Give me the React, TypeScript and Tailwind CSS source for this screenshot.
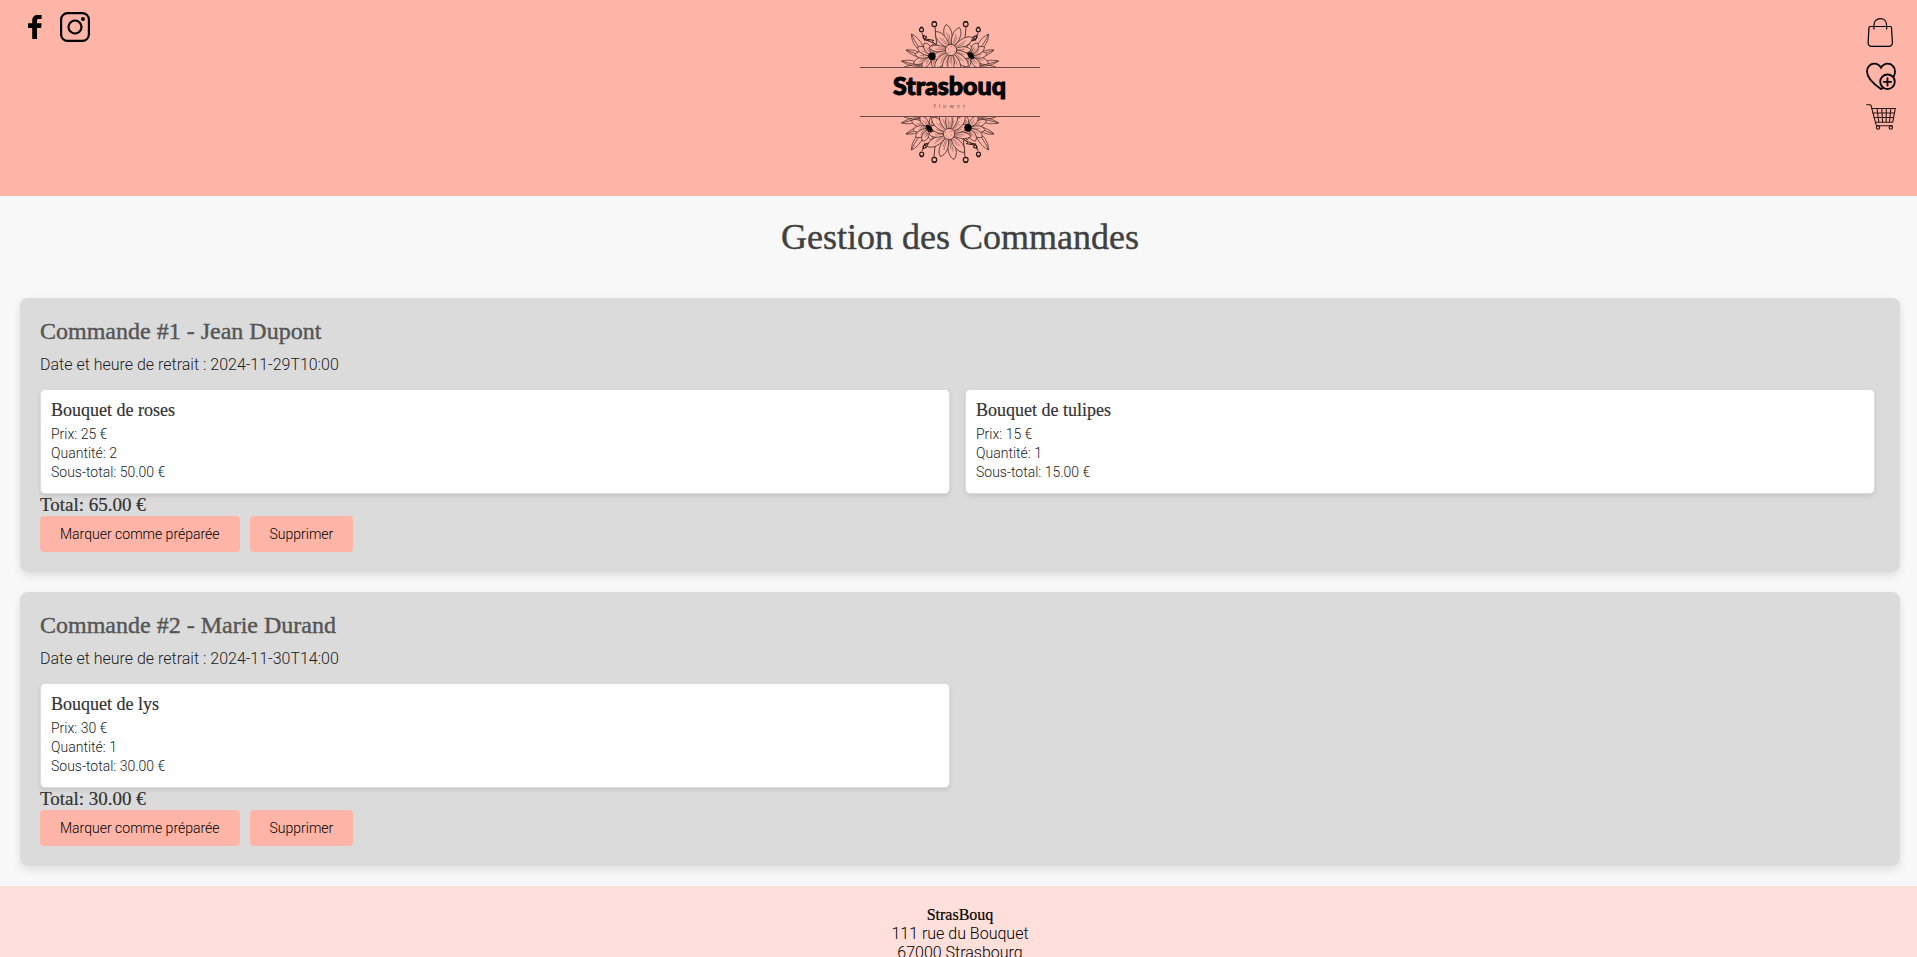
type Item = { name: string; price: number; quantity: number };
type Order = { id: number; customer: string; pickup: string; items: Item[] };

const orders: Order[] = [
  {
    id: 1,
    customer: "Jean Dupont",
    pickup: "2024-11-29T10:00",
    items: [
      { name: "Bouquet de roses", price: 25, quantity: 2 },
      { name: "Bouquet de tulipes", price: 15, quantity: 1 },
    ],
  },
  {
    id: 2,
    customer: "Marie Durand",
    pickup: "2024-11-30T14:00",
    items: [{ name: "Bouquet de lys", price: 30, quantity: 1 }],
  },
];

const largeSerif = "font-['Liberation_Serif',serif] font-normal [-webkit-text-stroke:0.4px_currentColor]";
const smallSerif = "font-['Liberation_Serif',serif] font-normal [-webkit-text-stroke:0.2px_currentColor]";

type PetalSpec = { angle: number; length: number; width: number };

// Petal angles are in degrees, clockwise from straight up.
function Petals({ x, y, start, petals }: { x: number; y: number; start: number; petals: PetalSpec[] }) {
  return (
    <g transform={`translate(${x} ${y})`}>
      {petals.map(({ angle, length: l, width: w }) => (
        <g key={angle} transform={`rotate(${angle})`}>
          <path
            fill="#feb4a7"
            d={`M-1.5 ${-start} C${-w} ${-l * 0.5} ${-w} ${-l * 0.85} 0 ${-l} C${w} ${-l * 0.85} ${w} ${-l * 0.5} 1.5 ${-start}Z`}
          />
          <path strokeWidth="0.35" d={`M-0.4 ${-start - 1} L-0.8 ${-l * 0.7} M0.8 ${-start - 1} L1 ${-l * 0.6}`} />
        </g>
      ))}
    </g>
  );
}

function Bouquet({ flipped = false }: { flipped?: boolean }) {
  return (
    <svg
      viewBox="0 0 180 51"
      className={flipped ? "block h-[51px] w-full rotate-180" : "block h-[51px] w-full"}
      fill="none"
      stroke="#2a1917"
      strokeWidth="0.65"
      aria-hidden="true"
    >
      <g strokeWidth="0.8">
        <path d="M75 11 L76 22 L77 30 M62 17 L64 23 L76 28 M64 24 L70 25 M72 25 L76 29" />
        <path d="M106 11 L105 22 L103 30 M118 17 L116 23 L104 28 M116 24 L110 25 M108 25 L104 29" />
        <circle cx="74.3" cy="8.2" r="2.4" strokeWidth="1.2" />
        <circle cx="61.5" cy="13.8" r="2" strokeWidth="1.2" />
        <circle cx="105.7" cy="8.2" r="2.4" strokeWidth="1.2" />
        <circle cx="118.3" cy="13.8" r="2" strokeWidth="1.2" />
        <path d="M72.4 5.6h3.8M103.8 5.6h3.8M60 11.4h3M116.8 11.4h3" strokeWidth="1.3" />
        <path d="M63.500 19.500l3 1.500-2 2.500-1.500-2zM116.500 19.500l-3 1.500 2 2.500 1.500-2zM66 23l8 1.500M114 23l-8 1.500" strokeWidth="1.100" />
      </g>
      <path d="M67 38 C58 35 51 27 51.5 18 C60 22 63 30 67 38Z M51.5 18 C55 27 60 33 67 38" />
      <path d="M113 38 C122 35 129 27 128.5 18 C120 22 117 30 113 38Z M128.5 18 C125 27 120 33 113 38" />
      <path d="M64 41 C58 42 51 39 46 34 C54 33 60 36 64 41Z M46 34 L62 40" />
      <path d="M116 41 C122 42 129 39 134 34 C126 33 120 36 116 41Z M134 34 L118 40" />
      <path d="M62 50 C54 51 47 49 41.5 45 C50 43 57 45 62 50Z M41.5 45 L60 50 M44 51 L52 49" />
      <path d="M118 50 C126 51 133 49 138.5 45 C130 43 123 45 118 50Z M138.5 45 L120 50 M136 51 L128 49" />
      <Petals
        x={72}
        y={40}
        start={3}
        petals={[
          { angle: -112, length: 20, width: 4 },
          { angle: -84, length: 17, width: 4 },
          { angle: -58, length: 17, width: 4 },
          { angle: -30, length: 15, width: 4 },
          { angle: 5, length: 12, width: 3 },
          { angle: -140, length: 15, width: 4 },
          { angle: 160, length: 14, width: 4 },
        ]}
      />
      <Petals
        x={110}
        y={40}
        start={3}
        petals={[
          { angle: 112, length: 20, width: 4 },
          { angle: 84, length: 17, width: 4 },
          { angle: 58, length: 17, width: 4 },
          { angle: 30, length: 15, width: 4 },
          { angle: -5, length: 12, width: 3 },
          { angle: 140, length: 15, width: 4 },
          { angle: 200, length: 14, width: 4 },
        ]}
      />
      <Petals
        x={91}
        y={34}
        start={5}
        petals={[
          { angle: -11, length: 26, width: 5 },
          { angle: 21, length: 24, width: 5 },
          { angle: -40, length: 24, width: 5 },
          { angle: 60, length: 25, width: 5 },
          { angle: 90, length: 20, width: 4 },
          { angle: -84, length: 22, width: 4 },
          { angle: 112, length: 20, width: 4 },
          { angle: 134, length: 24, width: 5 },
          { angle: -114, length: 22, width: 4 },
          { angle: -138, length: 24, width: 5 },
          { angle: 160, length: 24, width: 5 },
          { angle: -163, length: 24, width: 5 },
          { angle: 180, length: 22, width: 4 },
        ]}
      />
      <circle cx="91" cy="34" r="5.6" fill="#feb4a7" />
      <path d="M88 33h.6M90 36h.6M93 32h.6M91 30.5h.6M94 35.5h.6M88.5 36.8h.6" />
      <circle cx="72" cy="40.3" r="3.7" fill="#000" stroke="none" />
      <path d="M107.5 37 C110 35.5 113 36.5 113.6 39.5 L114 42.5 C111 44 108 41.5 107.5 37Z" fill="#000" />
    </svg>
  );
}

function Logo() {
  return (
    <a href="#accueil" aria-label="Strasbouq flower" className="block w-[180px] text-black">
      <Bouquet />
      <span className="flex h-[50px] flex-col items-center border-y border-[#6b4a45]">
        <span className="font-['Lato',sans-serif] text-[25px] leading-[34px] font-black [-webkit-text-stroke:1px_#000]">
          Strasbouq
        </span>
        <span className="pl-[3px] font-['Lato',sans-serif] text-[6px] leading-[8px] tracking-[3px]">flower</span>
      </span>
      <Bouquet flipped />
    </a>
  );
}

function FacebookIcon() {
  return (
    <svg viewBox="0 0 14 24" className="h-6 w-3.5" fill="#000" aria-hidden="true">
      <path d="M4.2 8.2V5.6C4.2 2 6.3 0 9.8 0h3.8v4.1h-2.7C9.500 4.100 9 4.700 9 5.800v2.400h4.600l-.5 4.700H9V24H4.200V12.900H0V8.200z" />
    </svg>
  );
}

function InstagramIcon() {
  return (
    <svg viewBox="0 0 30 30" className="size-[30px]" fill="none" stroke="#000" strokeWidth="2.200" aria-hidden="true">
      <rect x="1.100" y="1.100" width="27.800" height="27.800" rx="6.500" />
      <circle cx="15" cy="15" r="6.500" />
      <circle cx="23" cy="7" r="2" fill="#000" stroke="none" />
    </svg>
  );
}

function BagIcon() {
  return (
    <svg viewBox="0 0 30 30" className="size-[30px]" fill="none" stroke="#000" strokeWidth="1.2" strokeLinecap="round" aria-hidden="true">
      <path d="M4 8.500h20.500c.6 0 1 .4 1 1l.9 15c.1 2.400-1.300 3.800-3.600 3.800H5.700c-2.300 0-3.700-1.400-3.600-3.800L3 9.500c0-.6.400-1 1-1z" />
      <path d="M8 11V7C8 3.100 10.600.6 14.300.6s6.300 2.500 6.300 6.400v4" />
    </svg>
  );
}

function WishlistIcon() {
  return (
    <svg viewBox="0 0 30 28" className="h-7 w-[30px]" fill="none" stroke="#000" strokeWidth="1.8" strokeLinecap="round" aria-hidden="true">
      <path d="M16.500 26.300 15 27.100C8 22.300 1 16.500 1 9.500 1 5 4.300 1.700 8.300 1.700c2.900 0 5.200 1.500 6.700 4.100 1.500-2.600 3.800-4.100 6.700-4.100 4 0 7.300 3.300 7.300 7.800 0 1.800-.4 3.400-1.200 5" />
      <circle cx="21.500" cy="19.800" r="7.300" />
      <path d="M21.500 16.100v7.400M17.800 19.800h7.400" />
    </svg>
  );
}

function CartIcon() {
  return (
    <svg viewBox="0 0 30 26" className="h-[26px] w-[30px]" fill="none" stroke="#2a1512" strokeWidth="1.100" strokeLinecap="round" aria-hidden="true">
      <path d="M.6.800h3.200c.8 0 1.200.4 1.400 1.100l4.700 18.300c.3 1 .9 1.500 1.900 1.500h14.700" />
      <path d="M6 4.500h23.300l-2.600 13.700H9.500M6.800 9h21.700M8 13.500h19.700M11 4.500l1.800 13.700M15.800 4.500l.8 13.700M20.300 4.500l-.2 13.700M24.800 4.500l-1.300 13.700" />
      <circle cx="12" cy="23.600" r="1.700" />
      <circle cx="24.800" cy="23.600" r="1.700" />
    </svg>
  );
}

function Header() {
  return (
    <header className="grid min-h-[196px] grid-cols-[1fr_auto_1fr] items-start bg-[#feb4a7] pr-[18px]">
      <nav aria-label="Réseaux sociaux" className="flex items-center gap-[18px] pt-3 pl-7">
        <a href="#facebook" aria-label="Facebook">
          <FacebookIcon />
        </a>
        <a href="#instagram" aria-label="Instagram">
          <InstagramIcon />
        </a>
      </nav>
      <div className="pt-4">
        <Logo />
      </div>
      <nav aria-label="Boutique" className="flex flex-col items-end gap-[14px] pt-[18px] pr-[3px]">
        <a href="#boutique" aria-label="Boutique">
          <BagIcon />
        </a>
        <a href="#favoris" aria-label="Favoris">
          <WishlistIcon />
        </a>
        <a href="#panier" aria-label="Panier">
          <CartIcon />
        </a>
      </nav>
    </header>
  );
}

function OrderItem({ item }: { item: Item }) {
  return (
    <li className="w-[calc(50%-10px)] rounded-[5px] border border-[#ddd] bg-white px-2.5 pt-2.5 pb-[11px] shadow-[0_2px_4px_rgba(0,0,0,0.1)]">
      <h3 className={`${smallSerif} mb-1 text-[18px] leading-[21px] text-[#333]`}>{item.name}</h3>
      <div className="text-[14px] leading-[19px]">
        <p>Prix: {item.price} €</p>
        <p>Quantité: {item.quantity}</p>
        <p>Sous-total: {(item.price * item.quantity).toFixed(2)} €</p>
      </div>
    </li>
  );
}

function OrderCard({ order }: { order: Order }) {
  const total = order.items.reduce((sum, item) => sum + item.price * item.quantity, 0);
  const button = "rounded bg-[#feb4a7] px-5 py-2.5 text-[14px] leading-4 text-black";
  return (
    <article className="rounded-lg bg-[#dbdbdb] p-5 shadow-[0_4px_8px_rgba(0,0,0,0.1)]">
      <h2 className={`${largeSerif} mb-2.5 text-[24px] leading-[27px] text-[#555]`}>
        Commande #{order.id} - {order.customer}
      </h2>
      <p className="mb-[15px] text-[16px] leading-[19px]">Date et heure de retrait : {order.pickup}</p>
      <ul className="flex flex-wrap gap-[15px]">
        {order.items.map((item) => (
          <OrderItem key={item.name} item={item} />
        ))}
      </ul>
      <p className={`${smallSerif} text-[19px] leading-[22px] text-[#333]`}>Total: {total.toFixed(2)} €</p>
      <div className="flex gap-2.5">
        <button type="button" className={button}>
          Marquer comme préparée
        </button>
        <button type="button" className={button}>
          Supprimer
        </button>
      </div>
    </article>
  );
}

export default function App() {
  return (
    <div className="bg-[#f8f8f8] font-['Roboto',sans-serif] font-light text-[#1c1c1c]">
      <Header />
      <main className="flex flex-col gap-5 py-5 pr-[17px] pl-5">
        <h1 className={`${largeSerif} mb-5 text-center text-[36px] leading-[42px] text-[#404040]`}>
          Gestion des Commandes
        </h1>
        {orders.map((order) => (
          <OrderCard key={order.id} order={order} />
        ))}
      </main>
      <footer className="bg-[#ffdfda] pt-[19px] pb-5 pl-[3px] text-center text-[16px] leading-[19px] text-black">
        <h2 className={smallSerif}>StrasBouq</h2>
        <p>111 rue du Bouquet</p>
        <p>67000 Strasbourg</p>
      </footer>
    </div>
  );
}
